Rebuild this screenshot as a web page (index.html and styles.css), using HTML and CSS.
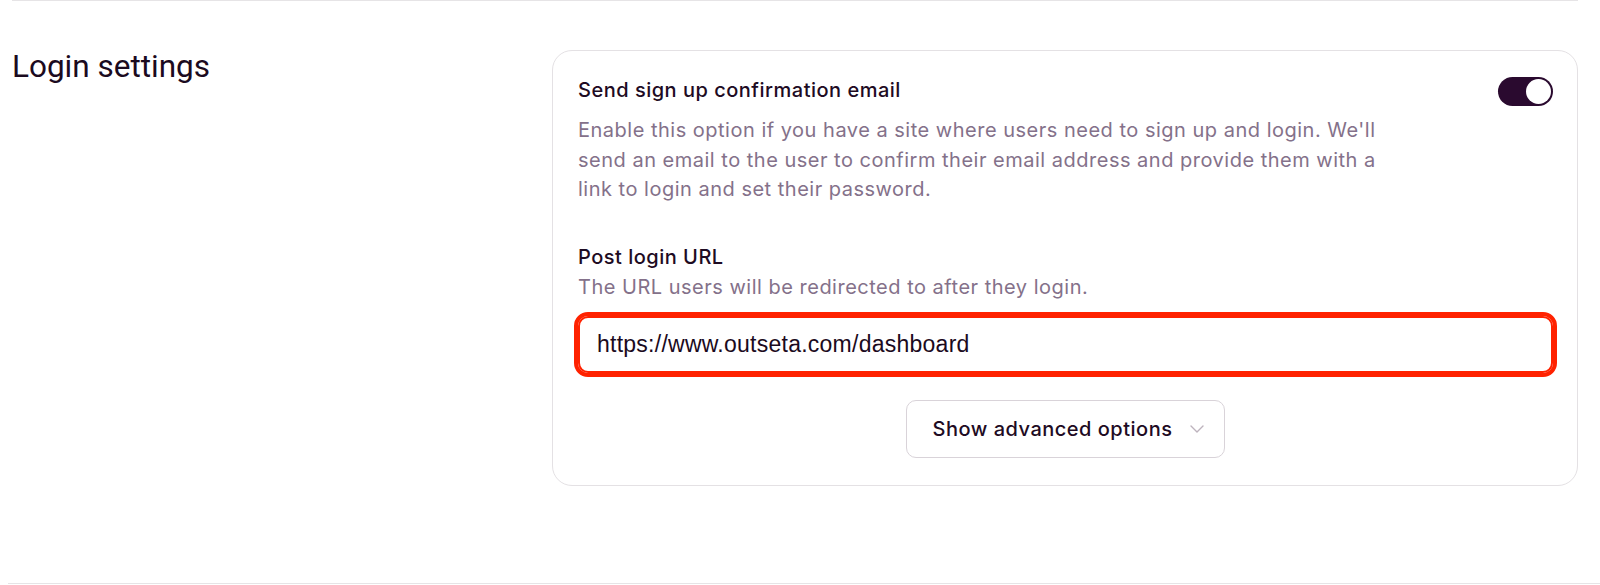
FILE: index.html
```html
<!DOCTYPE html>
<html lang="en">
<head>
  <meta charset="UTF-8">
  <meta name="viewport" content="width=device-width, initial-scale=1.0">
  <title>Login settings</title>
  <link rel="stylesheet" href="styles.css">
</head>
<body>
  <section class="settings-row">
    <h2 class="settings-title">Login settings</h2>
    <div class="card">
      <div class="option">
        <div class="option-text">
          <div class="label">Send sign up confirmation email</div>
          <p class="help">Enable this option if you have a site where users need to sign up and login. We'll send an email to the user to confirm their email address and provide them with a link to login and set their password.</p>
        </div>
        <span class="toggle on"><span class="knob"></span></span>
      </div>

      <div class="field">
        <div class="label">Post login URL</div>
        <p class="help">The URL users will be redirected to after they login.</p>
        <input class="input highlight" type="text" value="https://www.outseta.com/dashboard">
      </div>

      <div class="actions">
        <button class="btn-advanced" type="button">
          Show advanced options
          <svg class="chevron" width="14" height="8" viewBox="0 0 14 8" fill="none">
            <path d="M1 1l6 6 6-6" stroke="#bdb3bd" stroke-width="1.4" stroke-linecap="round" stroke-linejoin="round"/>
          </svg>
        </button>
      </div>
    </div>
  </section>
  <div class="divider"></div>
</body>
</html>
```

FILE: styles.css
```css
*{
  box-sizing: border-box;
}
body{
  margin: 0;
  background: #fff;
  color: #1e0b23;
  font-family: "Inter", "Noto Sans", sans-serif;
}
.settings-row{
  display: grid;
  grid-template-columns: 540px 1fr;
  margin: 0 22px 0 12px;
  padding: 49px 0 97px;
  border-top: 1px solid #e6e4e6;
}
.settings-title{
  margin: 0;
  font-family: "Roboto", "Liberation Sans", sans-serif;
  font-size: 31.5px;
  font-weight: 400;
  line-height: 34px;
  color: #1b0a20;
}
.card{
  border: 1px solid #e4e1e4;
  border-radius: 20px;
  padding: 24px 24px 27px 25px;
}
.option{
  display: flex;
  justify-content: space-between;
  align-items: flex-start;
}
.label{
  font-size: 20px;
  letter-spacing: 0.5px;
  line-height: 30px;
  font-weight: 500;
  color: #1e0b23;
}
.help{
  margin: 0;
  max-width: 830px;
  font-size: 20px;
  letter-spacing: 0.5px;
  line-height: 29.5px;
  color: #84718a;
}
.option .help{
  margin-top: 11px;
}
.toggle{
  position: relative;
  flex: none;
  width: 55px;
  height: 29px;
  margin-top: 2px;
  border-radius: 15px;
  background: #2a0a2f;
}
.toggle .knob{
  position: absolute;
  top: 2px;
  right: 2px;
  width: 25px;
  height: 25px;
  border-radius: 50%;
  background: #fff;
}
.field{
  margin-top: 37px;
}
.field .help{
  margin-top: 0;
  line-height: 30px;
}
.input{
  display: block;
  width: 100%;
  height: 57px;
  margin-top: 14px;
  padding: 0 17px;
  border: 2px solid #ff2200;
  border-radius: 10px;
  font-family: "Liberation Sans", "Roboto", sans-serif;
  font-size: 23px;
  letter-spacing: 0.25px;
  color: #1b0a20;
  background: #fff;
}
.input.highlight{
  outline: 4px solid #ff2200;
  outline-offset: 0;
}
.actions{
  display: flex;
  justify-content: center;
  margin-top: 27px;
}
.btn-advanced{
  display: flex;
  align-items: center;
  gap: 18px;
  height: 58px;
  padding: 0 20px 0 26px;
  border: 1px solid #d9d3d9;
  border-radius: 10px;
  background: #fff;
  font-family: "Inter", "Noto Sans", sans-serif;
  font-size: 20px;
  letter-spacing: 0.5px;
  font-weight: 500;
  color: #1e0b23;
  cursor: pointer;
}
.divider{
  margin-left: 8px;
  border-top: 1px solid #e6e4e6;
}
```
